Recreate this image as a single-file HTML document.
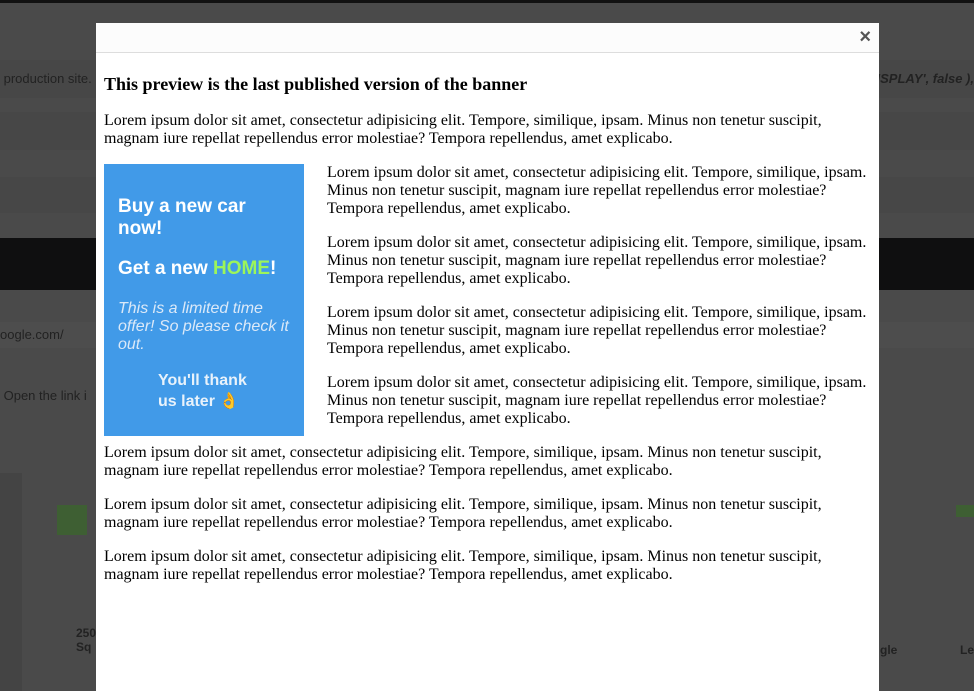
<!DOCTYPE html>
<html><head><meta charset="utf-8"><style>
body{margin:0;width:974px;height:691px;overflow:hidden;background:#4a4a4a;position:relative;font-family:"Liberation Serif",serif}
.bg{position:absolute;left:0;right:0}
.modal{position:absolute;left:96px;top:23px;width:783px;height:668px;background:#fff}
.hd{height:29px;border-bottom:1px solid #ddd;background:#fcfcfc;position:relative}
.x{position:absolute;right:8px;top:3px;font:bold 20px "Liberation Sans",sans-serif;color:#555}
.bd{padding:0 8px;font-size:16px;line-height:18px;color:#000;white-space:nowrap}
h3{font-size:18px;margin:20px 0 17px;line-height:22px}
p{margin:0 0 16px}
.ban{float:left;width:200px;height:272px;background:#419ae8;margin:0 23px 8px 0;color:#fff;font-family:"Liberation Sans",sans-serif;box-sizing:border-box;padding:32px 14px 0;white-space:normal}
.ban b{font-size:19px;line-height:22px;display:block}
.ban i{display:block;font-size:16px;line-height:18px;color:#dbe9f8;margin-top:20px}
</style></head><body>
<div class="bg" style="top:0;height:3px;background:#111"></div>
<div class="bg" style="top:60px;height:38px;background:#474747;color:#222;font:13px 'Liberation Sans',sans-serif;line-height:38px">&nbsp;production site. E<span style="position:absolute;right:0;font-style:italic;font-weight:bold">DISPLAY', false ),</span></div>
<div class="bg" style="top:112px;height:38px;background:#474747"></div>
<div class="bg" style="top:177px;height:36px;background:#474747"></div>
<div class="bg" style="top:238px;height:52px;background:#0f0f10"></div>
<div class="bg" style="top:322px;height:26px;background:#4d4d4d;color:#222;font:13px 'Liberation Sans',sans-serif;line-height:26px">oogle.com/</div>
<div class="bg" style="top:384px;height:24px;color:#222;font:13px 'Liberation Sans',sans-serif;line-height:24px">&nbsp;Open the link i</div>
<div style="position:absolute;left:0;top:473px;width:22px;height:218px;background:#444"></div>
<div style="position:absolute;left:57px;top:505px;width:30px;height:30px;background:#3e5f33"></div>
<div style="position:absolute;left:956px;top:505px;width:18px;height:12px;background:#3e5f33"></div>
<div style="position:absolute;left:76px;top:626px;font:bold 12px 'Liberation Sans',sans-serif;color:#222">250<br>Sq</div>
<div style="position:absolute;left:880px;top:643px;font:bold 12px 'Liberation Sans',sans-serif;color:#222">gle</div>
<div style="position:absolute;left:960px;top:643px;font:bold 12px 'Liberation Sans',sans-serif;color:#222">Le</div>
<div class="modal">
<div class="hd"><span class="x">×</span></div>
<div class="bd">
<h3>This preview is the last published version of the banner</h3>
<p>Lorem ipsum dolor sit amet, consectetur adipisicing elit. Tempore, similique, ipsam. Minus non tenetur suscipit,<br>magnam iure repellat repellendus error molestiae? Tempora repellendus, amet explicabo.</p>
<div class="ban"><b>Buy a new car now!</b><b style="margin-top:18px">Get a new <span style="color:#9cf55a">HOME</span>!</b><i>This is a limited time offer! So please check it out.</i><div style="font-weight:bold;font-size:16px;line-height:21px;margin:16px 0 0 40px;color:#e8f2fb">You'll thank<br>us later 👌</div></div>
<p>Lorem ipsum dolor sit amet, consectetur adipisicing elit. Tempore, similique, ipsam.<br>Minus non tenetur suscipit, magnam iure repellat repellendus error molestiae?<br>Tempora repellendus, amet explicabo.</p>
<p>Lorem ipsum dolor sit amet, consectetur adipisicing elit. Tempore, similique, ipsam.<br>Minus non tenetur suscipit, magnam iure repellat repellendus error molestiae?<br>Tempora repellendus, amet explicabo.</p>
<p>Lorem ipsum dolor sit amet, consectetur adipisicing elit. Tempore, similique, ipsam.<br>Minus non tenetur suscipit, magnam iure repellat repellendus error molestiae?<br>Tempora repellendus, amet explicabo.</p>
<p>Lorem ipsum dolor sit amet, consectetur adipisicing elit. Tempore, similique, ipsam.<br>Minus non tenetur suscipit, magnam iure repellat repellendus error molestiae?<br>Tempora repellendus, amet explicabo.</p>
<p style="clear:both">Lorem ipsum dolor sit amet, consectetur adipisicing elit. Tempore, similique, ipsam. Minus non tenetur suscipit,<br>magnam iure repellat repellendus error molestiae? Tempora repellendus, amet explicabo.</p>
<p>Lorem ipsum dolor sit amet, consectetur adipisicing elit. Tempore, similique, ipsam. Minus non tenetur suscipit,<br>magnam iure repellat repellendus error molestiae? Tempora repellendus, amet explicabo.</p>
<p>Lorem ipsum dolor sit amet, consectetur adipisicing elit. Tempore, similique, ipsam. Minus non tenetur suscipit,<br>magnam iure repellat repellendus error molestiae? Tempora repellendus, amet explicabo.</p>
</div></div>
</body></html>
